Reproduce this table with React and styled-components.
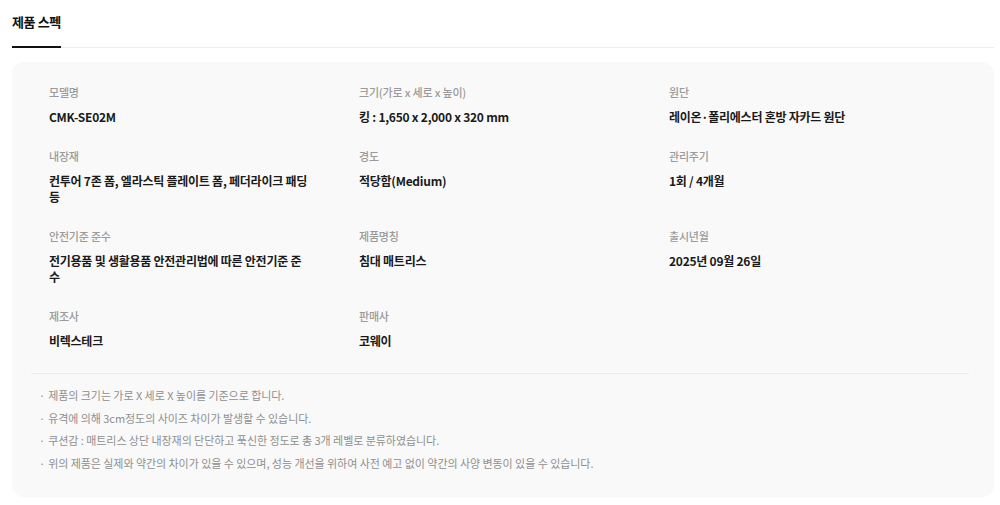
import React from 'react'
import styled, { createGlobalStyle } from 'styled-components'

const GlobalStyle = createGlobalStyle`
  html, body {
    margin: 0;
    padding: 0;
    background: #fff;
  }
  body {
    font-family: 'Noto Sans CJK KR', 'Noto Sans', sans-serif;
    color: #222;
  }
`

const Page = styled.div`
  padding: 12px 6px 0 12px;
`

const TabBar = styled.div`
  display: flex;
  border-bottom: 1px solid #ececec;
`

const Tab = styled.h2`
  margin: 0 0 -1px;
  padding: 0 0 14px;
  font-size: 13px;
  line-height: 20px;
  font-weight: 700;
  letter-spacing: -0.4px;
  color: #111;
  border-bottom: 2px solid #111;
`

const Panel = styled.section`
  margin-top: 14px;
  padding: 22px 25px 22px 19px;
  background: #f9f9f9;
  border-radius: 12px;
`

const SpecGrid = styled.dl`
  display: grid;
  grid-template-columns: repeat(3, 260px);
  column-gap: 50px;
  row-gap: 23px;
  margin: 0;
  padding: 0 0 24px 18px;
  border-bottom: 1px solid #ececec;
`

const Spec = styled.div`
  display: flex;
  flex-direction: column;
  gap: 9px;
`

const Label = styled.dt`
  font-size: 11px;
  line-height: 16px;
  font-weight: 500;
  letter-spacing: -0.2px;
  color: #9a9a9a;
`

const Value = styled.dd`
  margin: 0;
  font-size: 12px;
  line-height: 16px;
  font-weight: 700;
  letter-spacing: -0.25px;
  color: #1a1a1a;
`

const Notes = styled.ul`
  list-style: none;
  margin: 0;
  padding: 10px 0 0 8px;
`

const Note = styled.li`
  font-size: 11px;
  line-height: 22.7px;
  letter-spacing: -0.05px;
  color: #8f8f8f;

  &:before {
    content: '·';
    margin-right: 3px;
  }
`

const specs = [
  { label: '모델명', value: 'CMK-SE02M' },
  { label: '크기(가로 x 세로 x 높이)', value: '킹 : 1,650 x 2,000 x 320 mm' },
  { label: '원단', value: '레이온·폴리에스터 혼방 자카드 원단' },
  { label: '내장재', value: '컨투어 7존 폼, 엘라스틱 플레이트 폼, 페더라이크 패딩 등' },
  { label: '경도', value: '적당함(Medium)' },
  { label: '관리주기', value: '1회 / 4개월' },
  { label: '안전기준 준수', value: '전기용품 및 생활용품 안전관리법에 따른 안전기준 준수' },
  { label: '제품명칭', value: '침대 매트리스' },
  { label: '출시년월', value: '2025년 09월 26일' },
  { label: '제조사', value: '비렉스테크' },
  { label: '판매사', value: '코웨이' },
]

const notes = [
  '제품의 크기는 가로 X 세로 X 높이를 기준으로 합니다.',
  '유격에 의해 3cm정도의 사이즈 차이가 발생할 수 있습니다.',
  '쿠션감 : 매트리스 상단 내장재의 단단하고 푹신한 정도로 총 3개 레벨로 분류하였습니다.',
  '위의 제품은 실제와 약간의 차이가 있을 수 있으며, 성능 개선을 위하여 사전 예고 없이 약간의 사양 변동이 있을 수 있습니다.',
]

export default function App() {
  return (
    <Page>
      <GlobalStyle />
      <TabBar>
        <Tab>제품 스펙</Tab>
      </TabBar>
      <Panel>
        <SpecGrid>
          {specs.map(s => (
            <Spec key={s.label}>
              <Label>{s.label}</Label>
              <Value>{s.value}</Value>
            </Spec>
          ))}
        </SpecGrid>
        <Notes>
          {notes.map(n => (
            <Note key={n}>{n}</Note>
          ))}
        </Notes>
      </Panel>
    </Page>
  )
}
